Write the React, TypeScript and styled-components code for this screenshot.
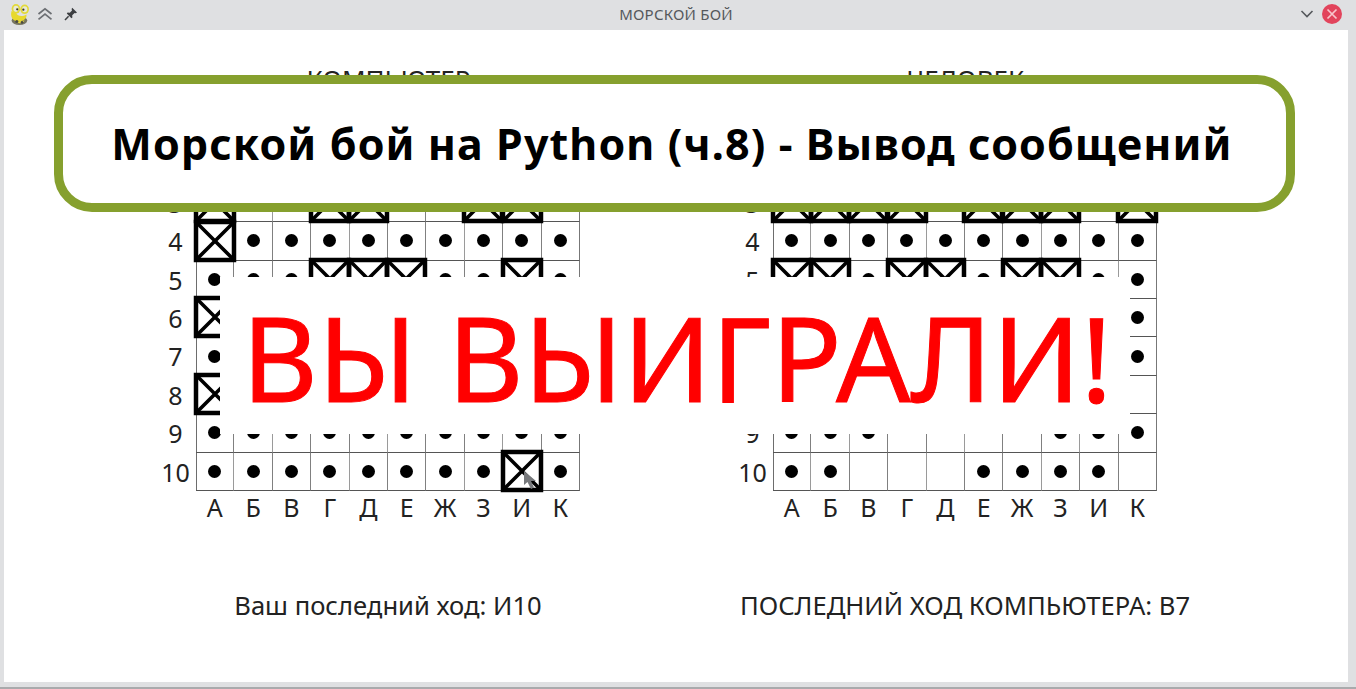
import React from "react";
import styled, { createGlobalStyle } from "styled-components";

const Global = createGlobalStyle`
  html, body { margin: 0; padding: 0; background: #dfe0e2; }
  body { font-family: "Noto Sans", "Open Sans", sans-serif; overflow: hidden; }
`;

const Page = styled.div`
  position: relative;
  width: 1356px;
  height: 689px;
  background: #dfe0e2;
  overflow: hidden;
  border-bottom: 2px solid #a9aaac;
  box-sizing: border-box;
`;

const TitleBar = styled.header`
  height: 30px;
  display: flex;
  align-items: center;
  justify-content: space-between;
  padding: 0 14px 2px 9px;
  box-sizing: border-box;
  position: relative;
`;

const TitleText = styled.div`
  position: absolute;
  left: 0;
  right: 4px;
  top: 5px;
  text-align: center;
  font-size: 15px;
  line-height: 19px;
  letter-spacing: 0.2px;
  color: #55585c;
`;

const TitleGroup = styled.div<{ $gap: number }>`
  display: flex;
  align-items: center;
  gap: ${(p) => p.$gap}px;
`;

const Content = styled.main`
  margin: 0 8px 0 4px;
  height: 652px;
  background: #fff;
  display: flex;
  padding: 32px 0 0 152px;
  gap: 153px;
  box-sizing: border-box;
`;

const Panel = styled.section`
  display: grid;
  grid-template-columns: 40px 384px;
  grid-template-rows: 45px 384px 36px auto;
  align-content: start;
  color: #222;
`;

const Heading = styled.div`
  grid-column: 2;
  font-size: 26px;
  line-height: 36px;
  margin-top: -1px;
  text-align: center;
  margin-left: 1px;
`;

const Numbers = styled.div`
  grid-column: 1;
  grid-row: 2;
  display: grid;
  grid-template-rows: repeat(10, 1fr);
  padding: 0 1px 0 0;
  height: 384px;
  box-sizing: border-box;
`;

const Num = styled.span`
  font-size: 25px;
  line-height: 38px;
  text-align: center;
`;

const Board = styled.div`
  grid-column: 2;
  grid-row: 2;
  display: grid;
  grid-template-columns: repeat(10, 38.4px);
  grid-template-rows: repeat(10, 38.4px);
  box-shadow: inset 1px 1px 0 #6d6d6d;
`;

const Cell = styled.div`
  position: relative;
  display: flex;
  align-items: center;
  justify-content: center;
  box-sizing: border-box;
  border-right: 1px solid #808080;
  border-bottom: 1px solid #555;
  &:nth-child(3n + 1) { border-right-color: #9a9a9a; }
  &:nth-child(10n) { border-right-color: #777; border-right-width: 1.5px; }
`;

const HitCell = styled(Cell)`
  z-index: 1;
`;

const Dot = styled.span`
  width: 13px;
  height: 13px;
  border-radius: 50%;
  background: #000;
`;

const HitMark = styled.svg`
  display: block;
  width: 38.4px;
  height: 38.4px;
  flex: none;
  overflow: visible;
`;

const CursorMark = styled.svg`
  position: absolute;
  left: 20px;
  top: 17px;
  width: 14px;
  height: 20px;
`;

const Letters = styled.div`
  grid-column: 2;
  grid-row: 3;
  display: grid;
  grid-template-columns: repeat(10, 38.4px);
`;

const Letter = styled.span`
  font-size: 25px;
  line-height: 32px;
  text-align: center;
  margin-right: 1px;
`;

const Status = styled.div`
  grid-column: 2;
  grid-row: 4;
  display: flex;
  justify-content: center;
  white-space: nowrap;
  font-size: 25.6px;
  line-height: 36px;
  margin-top: 61px;
`;

const Banner = styled.div`
  position: absolute;
  z-index: 3;
  left: 54px;
  top: 75px;
  width: 1241px;
  height: 137px;
  box-sizing: border-box;
  border: 9px solid #86a02e;
  border-radius: 38px;
  padding-right: 5px;
  background: #fff;
  display: flex;
  align-items: center;
  justify-content: center;
  font-family: "Noto Sans", sans-serif;
  font-weight: 700;
  font-size: 43px;
  letter-spacing: 1.1px;
  color: #000;
  white-space: nowrap;
`;

const WinMessage = styled.div`
  position: absolute;
  z-index: 2;
  left: 220px;
  top: 277px;
  width: 910px;
  height: 157px;
  padding: 2px 0 0 4px;
  box-sizing: border-box;
  background: #fff;
  display: flex;
  align-items: center;
  justify-content: center;
  color: #ff0000;
  font-size: 117px;
  line-height: 155px;
  -webkit-text-stroke: 1px #ff0000;
  white-space: nowrap;
`;

type Mark = "." | "x" | "_";

const leftBoard = [
  "..........",
  "x..xx...x.",
  "x..xx..xx.",
  "x.........",
  "...xxx..x.",
  "x.........",
  "..........",
  "x.........",
  "..........",
  "........x.",
];

const rightBoard = [
  "xx..xx.xx.",
  "....._....",
  "xxxx.xxx.x",
  "..........",
  "xx.xx.xx..",
  "_________.",
  "_________.",
  "__________",
  "...____...",
  "..___...._",
];

const columns = ["А", "Б", "В", "Г", "Д", "Е", "Ж", "З", "И", "К"];
const rows = ["1", "2", "3", "4", "5", "6", "7", "8", "9", "10"];

const Hit = () => (
  <HitMark viewBox="0 0 38.4 38.4">
    <rect x="0" y="0" width="38" height="38" fill="none" stroke="#000" strokeWidth="4.5" />
    <path d="M0 0 L38 38 M38 0 L0 38" stroke="#000" strokeWidth="3.6" />
  </HitMark>
);

const GameBoard = ({ data, cursorAt }: { data: string[]; cursorAt?: string }) => (
  <Board>
    {data.flatMap((row, r) =>
      row.split("").map((ch, c) => {
        const mark = ch as Mark;
        const key = `${r}-${c}`;
        if (mark === "x") {
          return (
            <HitCell key={key}>
              <Hit />
              {cursorAt === key && (
                <CursorMark viewBox="0 0 14 20">
                  <path d="M1 1 L1 15 L4.5 12 L8 19 L11 17.5 L8 11 L13 11 Z" fill="#77797c" />
                </CursorMark>
              )}
            </HitCell>
          );
        }
        return <Cell key={key}>{mark === "." && <Dot />}</Cell>;
      })
    )}
  </Board>
);

const BoardPanel = ({
  title,
  status,
  data,
  cursorAt,
}: {
  title: string;
  status: string;
  data: string[];
  cursorAt?: string;
}) => (
  <Panel>
    <Heading>{title}</Heading>
    <Numbers>
      {rows.map((n) => (
        <Num key={n}>{n}</Num>
      ))}
    </Numbers>
    <GameBoard data={data} cursorAt={cursorAt} />
    <Letters>
      {columns.map((l) => (
        <Letter key={l}>{l}</Letter>
      ))}
    </Letters>
    <Status>{status}</Status>
  </Panel>
);

const SnakeLogo = () => (
  <svg width="20" height="23" viewBox="0 0 23 26">
    <ellipse cx="12" cy="20" rx="9" ry="5" fill="#77755f" />
    <path d="M3 9 C1 15 4 21 11 21 C17 21 21 17 20 13 C15 16 10 15 8 11 Z" fill="#e8d92c" />
    <path d="M7 20 C10 24 15 24 18 20 C14 21 10 21 7 20 Z" fill="#efe03a" />
    <ellipse cx="8" cy="6.5" rx="5" ry="5.5" fill="#e2d93a" />
    <ellipse cx="18" cy="7" rx="5" ry="5.5" fill="#e2d93a" />
    <ellipse cx="8" cy="6.5" rx="3" ry="3.5" fill="#e9e9d6" />
    <ellipse cx="18" cy="7" rx="3" ry="3.5" fill="#e9e9d6" />
    <circle cx="9.5" cy="7" r="1.3" fill="#3a3a2a" />
    <circle cx="16.5" cy="7.5" r="1.3" fill="#3a3a2a" />
    <circle cx="9" cy="21" r="1.8" fill="#4a4a42" />
    <circle cx="15" cy="22" r="1.5" fill="#4a4a42" />
  </svg>
);

const ChevronsUp = () => (
  <svg width="19" height="14" viewBox="0 0 19 14" fill="none" stroke="#6c6f73" strokeWidth="1.7">
    <path d="M1.5 7 L8 1.8 L14.5 7" />
    <path d="M1.5 12.4 L8 7.2 L14.5 12.4" />
  </svg>
);

const Pin = () => (
  <svg width="14" height="14" viewBox="0 0 14 14">
    <path d="M8.2 0.8 L13 5.4 L11.8 6.2 L10.6 5.9 L8.2 8.2 L8.4 10.4 L7.4 11.2 L2.8 6.6 L3.6 5.6 L5.8 5.8 L8 3.4 L7.6 2.1 Z" fill="#3d3f42" />
    <path d="M4.6 9.2 L1 13" stroke="#3d3f42" strokeWidth="1.5" />
  </svg>
);

const ChevronDown = () => (
  <svg width="14" height="10" viewBox="0 0 14 10" fill="none" stroke="#55585c" strokeWidth="1.6">
    <path d="M1.5 2 L7 7.5 L12.5 2" />
  </svg>
);

const CloseButton = () => (
  <svg width="20" height="20" viewBox="0 0 20 20">
    <circle cx="10" cy="10" r="10" fill="#e2445c" />
    <path d="M5.5 5.5 L14.5 14.5 M14.5 5.5 L5.5 14.5" stroke="#f8c6cd" strokeWidth="1.7" />
  </svg>
);

export default function App() {
  return (
    <Page>
      <Global />
      <TitleBar>
        <TitleGroup $gap={8}>
          <SnakeLogo />
          <ChevronsUp />
          <Pin />
        </TitleGroup>
        <TitleText>МОРСКОЙ БОЙ</TitleText>
        <TitleGroup $gap={8}>
          <ChevronDown />
          <CloseButton />
        </TitleGroup>
      </TitleBar>
      <Content>
        <BoardPanel
          title="КОМПЬЮТЕР"
          status="Ваш последний ход: И10"
          data={leftBoard}
          cursorAt="9-8"
        />
        <BoardPanel title="ЧЕЛОВЕК" status="ПОСЛЕДНИЙ ХОД КОМПЬЮТЕРА: В7" data={rightBoard} />
      </Content>
      <Banner>Морской бой на Python (ч.8) - Вывод сообщений</Banner>
      <WinMessage>ВЫ ВЫИГРАЛИ!</WinMessage>
    </Page>
  );
}
